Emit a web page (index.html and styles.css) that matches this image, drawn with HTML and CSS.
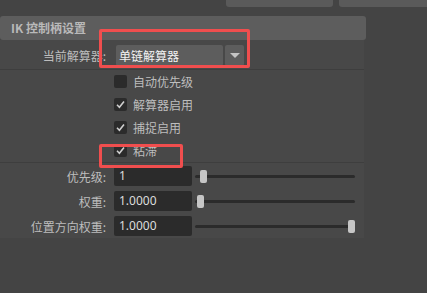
FILE: index.html
```html
<!DOCTYPE html>
<html>
<head>
    <meta charset="UTF-8">
    <title>IK 控制柄设置</title>
    <link rel="stylesheet" href="styles.css">
</head>
<body>
<div class="topbar">
    <div class="tab tab-a"></div>
    <div class="tab tab-b"></div>
</div>

<div class="section">
    <div class="section-header">IK 控制柄设置</div>
    <div class="section-body">
        <div class="row solver-row">
            <span class="label">当前解算器:</span>
            <div class="select">
                <div class="select-value">单链解算器</div>
                <div class="select-arrow"><span class="tri"></span></div>
            </div>
        </div>
        <div class="divider"></div>
        <div class="checks">
            <div class="row check-row">
                <span class="label"></span>
                <span class="box"></span>
                <span class="check-text">自动优先级</span>
            </div>
            <div class="row check-row">
                <span class="label"></span>
                <span class="box checked"><svg viewBox="0 0 13 13" width="13" height="13"><path d="M3 6.8 L5.4 9.2 L10 3.6" fill="none" stroke="#cfcfcf" stroke-width="1.6"/></svg></span>
                <span class="check-text">解算器启用</span>
            </div>
            <div class="row check-row">
                <span class="label"></span>
                <span class="box checked"><svg viewBox="0 0 13 13" width="13" height="13"><path d="M3 6.8 L5.4 9.2 L10 3.6" fill="none" stroke="#cfcfcf" stroke-width="1.6"/></svg></span>
                <span class="check-text">捕捉启用</span>
            </div>
            <div class="row check-row">
                <span class="label"></span>
                <span class="box checked"><svg viewBox="0 0 13 13" width="13" height="13"><path d="M3 6.8 L5.4 9.2 L10 3.6" fill="none" stroke="#cfcfcf" stroke-width="1.6"/></svg></span>
                <span class="check-text">粘滞</span>
            </div>
        </div>
        <div class="divider"></div>
        <div class="sliders">
            <div class="row slider-row">
                <span class="label">优先级:</span>
                <div class="field">1</div>
                <div class="track"><span class="handle" style="left: 5px"></span></div>
            </div>
            <div class="row slider-row">
                <span class="label">权重:</span>
                <div class="field">1.0000</div>
                <div class="track"><span class="handle" style="left: 2px"></span></div>
            </div>
            <div class="row slider-row">
                <span class="label">位置方向权重:</span>
                <div class="field">1.0000</div>
                <div class="track"><span class="handle" style="left: 153px"></span></div>
            </div>
        </div>
    </div>
</div>

<div class="mark mark-solver"></div>
<div class="mark mark-sticky"></div>
</body>
</html>
```

FILE: styles.css
```css
body{
    margin: 0;
    background-color: #444444;
    font-family: "Noto Sans CJK SC", "Noto Sans", sans-serif;
    font-size: 12px;
    color: #bcbcbc;
    position: relative;
    height: 293px;
    overflow: hidden;
}
.topbar{
    display: flex;
    height: 7px;
    padding-left: 226px;
    gap: 6px;
}
.tab{
    background-color: #5a5a5a;
    border-radius: 0 0 3px 3px;
}
.tab-a{
    width: 107px;
}
.tab-b{
    flex: 1;
    border-radius: 0 0 0 3px;
}
.section{
    margin-top: 9px;
    width: 366px;
}
.section-header{
    height: 24px;
    line-height: 24px;
    padding-left: 11px;
    background-color: #5d5d5d;
    border-radius: 3px;
    font-weight: bold;
    color: #b9b9b9;
}
.section-body{
    width: 364px;
    background-color: #484848;
    padding-bottom: 2px;
}
.row{
    display: flex;
    align-items: center;
}
.label{
    width: 106px;
    text-align: right;
    flex-shrink: 0;
    color: #bdbdbd;
}
.solver-row{
    padding: 5px 0 3px;
}
.select{
    display: flex;
    margin-left: 10px;
    gap: 2px;
    height: 21px;
}
.select-value{
    width: 104px;
    padding-left: 3px;
    background-color: #5d5d5d;
    border-radius: 2px;
    color: #f2f2f2;
    line-height: 21px;
}
.select-arrow{
    width: 19px;
    background-color: #5d5d5d;
    border-radius: 2px;
    display: flex;
    align-items: center;
    justify-content: center;
}
.tri{
    width: 0;
    height: 0;
    border-left: 5px solid transparent;
    border-right: 5px solid transparent;
    border-top: 5px solid #c4c4c4;
}
.divider{
    height: 1px;
    background-color: #3e3e3e;
}
.check-row{
    height: 23px;
}
.box{
    width: 13px;
    height: 13px;
    margin-left: 8px;
    background-color: #2b2b2b;
    border-radius: 2px;
    display: block;
}
.box svg{
    display: block;
}
.check-text{
    margin-left: 6px;
    color: #bdbdbd;
}
.sliders{
    padding-top: 3px;
}
.slider-row{
    height: 20px;
    margin-bottom: 5px;
}
.slider-row:last-child{
    margin-bottom: 0;
}
.field{
    width: 73px;
    height: 20px;
    line-height: 20px;
    margin-left: 8px;
    padding-left: 5px;
    background-color: #2b2b2b;
    border-radius: 2px;
    color: #dcdcdc;
    font-family: "Noto Sans", sans-serif;
}
.track{
    position: relative;
    width: 160px;
    height: 3px;
    margin-left: 3px;
    background-color: #2b2b2b;
    border-radius: 2px;
}
.handle{
    position: absolute;
    top: -5px;
    width: 7px;
    height: 13px;
    background-color: #c6c6c6;
    border-radius: 2px;
}
.mark{
    position: absolute;
    border: 3px solid #f04e4e;
    border-radius: 2px;
}
.mark-solver{
    left: 99px;
    top: 29px;
    width: 145px;
    height: 33px;
}
.mark-sticky{
    left: 99px;
    top: 144px;
    width: 78px;
    height: 18px;
}
```
